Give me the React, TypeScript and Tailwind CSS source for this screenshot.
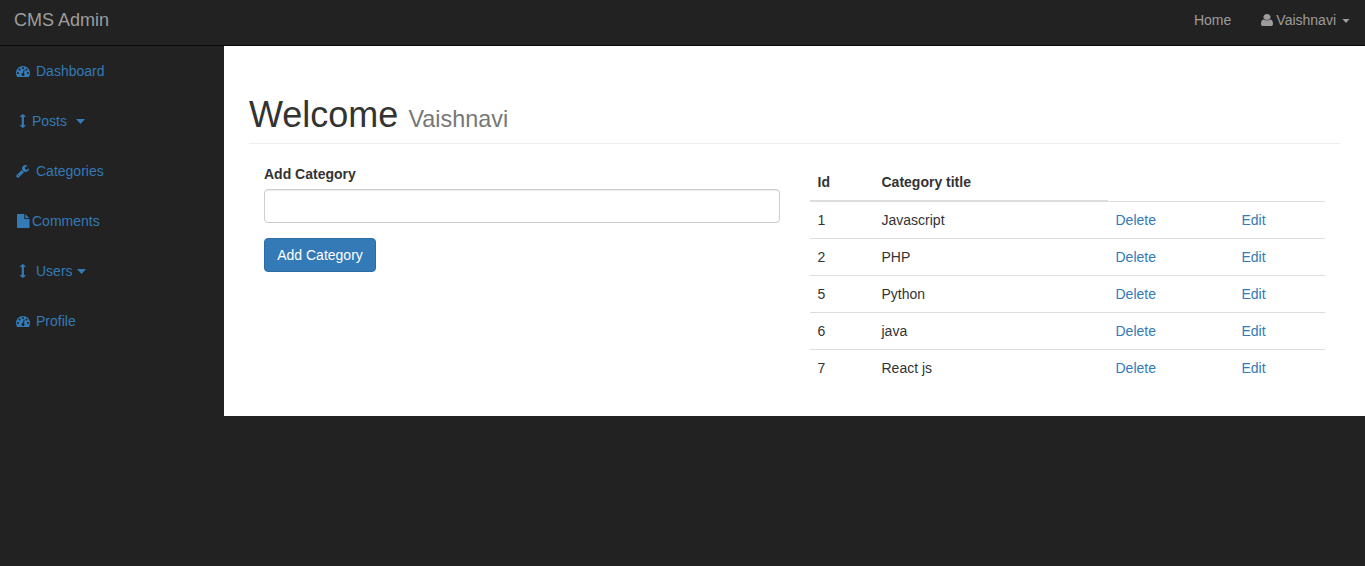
import type { ReactNode } from "react";

const DASH = "M384 1152q0-53-37.500-90.500t-90.500-37.500-90.500 37.500-37.500 90.500 37.500 90.500 90.500 37.500 90.500-37.500 37.500-90.500zm192-448q0-53-37.500-90.500t-90.500-37.500-90.500 37.500-37.500 90.500 37.500 90.500 90.500 37.500 90.500-37.500 37.500-90.500zm428 481l101-382q6-26-7.500-48.500t-38.500-29.500-48 6.500-30 39.500l-101 382q-60 5-107 43.500t-63 98.500q-20 77 20 146t117 89 146-20 89-117q16-60-6-117t-72-91zm660-33q0-53-37.500-90.500t-90.500-37.500-90.500 37.500-37.500 90.500 37.500 90.500 90.500 37.500 90.500-37.500 37.500-90.500zm-640-640q0-53-37.500-90.500t-90.500-37.500-90.500 37.500-37.500 90.500 37.500 90.500 90.500 37.500 90.500-37.500 37.500-90.500zm448 192q0-53-37.500-90.500t-90.500-37.500-90.500 37.500-37.500 90.500 37.500 90.500 90.500 37.500 90.500-37.500 37.500-90.500zm320 448q0 261-141 483-19 29-54 29h-1402q-35 0-54-29-141-221-141-483 0-182 71-348t191-286 286-191 348-71 348 71 286 191 191 286 71 348z";
const ARROWS = "M608 320q0 26-19 45t-45 19h-128v1024h128q26 0 45 19t19 45-19 45l-243 256q-19 19-45 19t-45-19l-243-256q-19-19-19-45t19-45 45-19h128v-1024h-128q-26 0-45-19t-19-45 19-45l243-256q19-19 45-19t45 19l243 256q19 19 19 45z";
const WRENCH = "M384 1472q0-26-19-45t-45-19-45 19-19 45 19 45 45 19 45-19 19-45zm644-420l-682 682q-37 37-90 37-52 0-91-37l-106-108q-38-36-38-90 0-53 38-91l681-681q39 98 114.500 173.500t173.500 114.500zm634-435q0 39-23 106-47 134-164.500 217.500t-258.500 83.500q-185 0-316.500-131.500t-131.500-316.500 131.500-316.500 316.500-131.500q58 0 121.500 16.500t107.500 46.500q16 11 16 28t-16 28l-293 169v224l193 107q5-3 79-48.500t135.500-81 70.500-35.500q15 0 23.500 10t8.500 25z";
const FILE = "M1024 512v-472q22 14 36 28l408 408q14 14 28 36h-472zm-128 32q0 40 28 68t68 28h544v1056q0 40-28 68t-68 28h-1344q-40 0-68-28t-28-68v-1600q0-40 28-68t68-28h800v544z";
const USER = "M1280 1399q0 109-62.500 187t-150.500 78h-854q-88 0-150.500-78t-62.500-187q0-85 8.500-160.500t31.500-152 58.500-131 94-89 134.500-34.500q131 128 313 128t313-128q76 0 134.500 34.500t94 89 58.500 131 31.500 152 8.500 160.500zm-256-887q0 159-112.500 271.500t-271.500 112.500-271.500-112.500-112.500-271.500 112.500-271.500 271.500-112.500 271.500 112.500 112.500 271.500z";

const Icon = ({ d, w, className }: { d: string; w: number; className: string }) => (
  <svg
    viewBox={`0 0 ${w} 1792`}
    preserveAspectRatio="none"
    fill="currentColor"
    className={"h-[14px] shrink-0 overflow-visible " + className}
  >
    <path d={d} />
  </svg>
);

const Caret = ({ className }: { className: string }) => (
  <svg viewBox="0 0 9 5" fill="currentColor" className={"shrink-0 " + className}>
    <path d="M0 0h9L4.500 5z" />
  </svg>
);

const NavItem = ({ children }: { children: ReactNode }) => (
  <li>
    <a href="#" className="flex h-[50px] items-center pl-4 text-[#337ab7]">{children}</a>
  </li>
);

const rows = [
  [1, "Javascript"],
  [2, "PHP"],
  [5, "Python"],
  [6, "java"],
  [7, "React js"],
];

export default function App() {
  return (
    <div className="min-h-[566px] bg-[#222] font-['Liberation_Sans',Arial,sans-serif] text-[14px] leading-5 text-[#333]">
      <header className="flex h-[46px] justify-between border-b border-[#080808] text-[#9d9d9d]">
        <a href="#" className="pt-[10px] pl-[14px] text-[18px]">CMS Admin</a>
        <nav className="flex gap-[30px] pt-[10px] pr-[15px]">
          <a href="#">Home</a>
          <a href="#" className="flex h-5 items-center">
            <Icon d={USER} w={1280} className="mr-[3px] w-[12px]" />
            Vaishnavi
            <Caret className="mt-px ml-[6px] h-[4px] w-[8px]" />
          </a>
        </nav>
      </header>
      <div className="flex items-start">
        <aside className="w-[224px] shrink-0">
          <ul>
            <NavItem><Icon d={DASH} w={1792} className="mr-[6px] w-[14px]" />Dashboard</NavItem>
            <NavItem><Icon d={ARROWS} w={640} className="mr-[6px] ml-1 w-[6px]" />Posts<Caret className="mt-px ml-[8.5px] h-[5px] w-[9px]" /></NavItem>
            <NavItem><Icon d={WRENCH} w={1664} className="mr-[7px] w-[13px]" />Categories</NavItem>
            <NavItem><Icon d={FILE} w={1536} className="mr-[3px] ml-[0.5px] w-[12.5px]" />Comments</NavItem>
            <NavItem><Icon d={ARROWS} w={640} className="mr-[10px] ml-1 w-[6px]" />Users<Caret className="mt-px ml-[4.5px] h-[5px] w-[9px]" /></NavItem>
            <NavItem><Icon d={DASH} w={1792} className="mr-[6px] w-[14px]" />Profile</NavItem>
          </ul>
        </aside>
        <main className="h-[370px] flex-1 bg-white px-[25px] pt-[49px]">
          <h1 className="h-[49px] border-b border-[#eee] text-[36px] leading-[39.6px] font-medium">
            Welcome <small className="text-[23.4px] leading-none font-normal text-[#777]">Vaishnavi</small>
          </h1>
          <div className="grid grid-cols-2 gap-[30px] px-[15px] pt-5">
            <form onSubmit={(e) => e.preventDefault()}>
              <label htmlFor="cat" className="mb-[5px] block font-bold">Add Category</label>
              <input id="cat" className="block h-[34px] w-full rounded border border-[#ccc] px-3 shadow-[inset_0_1px_1px_rgba(0,0,0,0.075)]" />
              <button className="mt-[15px] h-[34px] w-[112px] rounded border border-[#2e6da4] bg-[#337ab7] text-white">Add Category</button>
            </form>
            <table className="w-full table-fixed border-collapse self-start">
              <colgroup>
                <col className="w-[64px]" />
                <col className="w-[234px]" />
                <col className="w-[126px]" />
                <col />
              </colgroup>
              <thead>
                <tr className="h-[37px] text-left">
                  <th className="border-b-2 border-[#ddd] p-2">Id</th>
                  <th className="border-b-2 border-[#ddd] p-2">Category title</th>
                </tr>
              </thead>
              <tbody>
                {rows.map(([id, title]) => (
                  <tr key={id} className="h-[37px]">
                    <td className="border-t border-[#ddd] p-2">{id}</td>
                    <td className="border-t border-[#ddd] p-2">{title}</td>
                    <td className="border-t border-[#ddd] p-2"><a href="#" className="text-[#337ab7]">Delete</a></td>
                    <td className="border-t border-[#ddd] p-2"><a href="#" className="text-[#337ab7]">Edit</a></td>
                  </tr>
                ))}
              </tbody>
            </table>
          </div>
        </main>
      </div>
    </div>
  );
}
